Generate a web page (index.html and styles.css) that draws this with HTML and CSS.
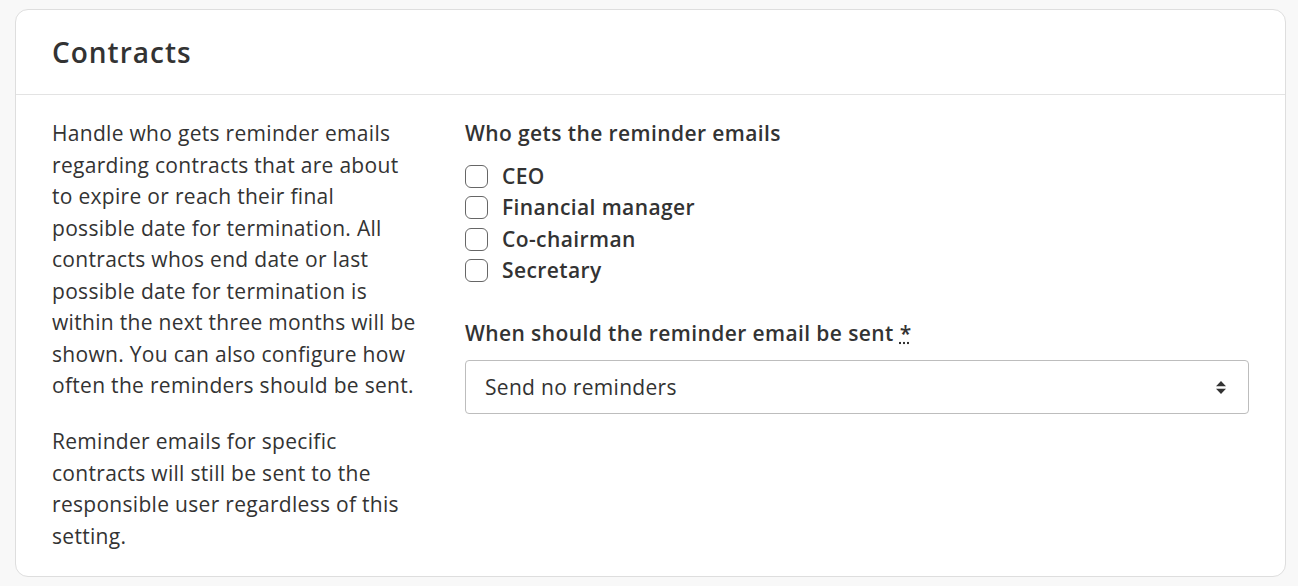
FILE: index.html
```html
<!DOCTYPE html>
<html lang="en">
<head>
<meta charset="utf-8">
<title>Contracts</title>
<link rel="stylesheet" href="styles.css">
</head>
<body>
<section class="card">
  <header class="card-header">
    <h2 class="card-title">Contracts</h2>
  </header>
  <div class="card-body">
    <div class="intro">
      <p>Handle who gets reminder emails regarding contracts that are about to expire or reach their final possible date for termination. All contracts whos end date or last possible date for termination is within the next three months will be shown. You can also configure how often the reminders should be sent.</p>
      <p>Reminder emails for specific contracts will still be sent to the responsible user regardless of this setting.</p>
    </div>
    <div class="form">
      <div class="field">
        <div class="field-label">Who gets the reminder emails</div>
        <div class="checks">
          <label class="check"><span class="box"></span>CEO</label>
          <label class="check"><span class="box"></span>Financial manager</label>
          <label class="check"><span class="box"></span>Co-chairman</label>
          <label class="check"><span class="box"></span>Secretary</label>
        </div>
      </div>
      <div class="field">
        <div class="field-label">When should the reminder email be sent <abbr class="req" title="required">*</abbr></div>
        <div class="select">
          <span>Send no reminders</span>
          <svg class="arrows" width="10" height="13" viewBox="0 0 10 13"><path d="M5 0 L10 5.2 H0 Z M5 13 L10 7.8 H0 Z" fill="#333"/></svg>
        </div>
      </div>
    </div>
  </div>
</section>
</body>
</html>
```

FILE: styles.css
```css
* { box-sizing: border-box; }
html, body { margin: 0; padding: 0; }
body {
  background: #f8f8f8;
  font-family: "Open Sans", Lato, sans-serif;
  color: #333;
  padding: 9px 12px 9px 15px;
}
.card {
  background: #fff;
  border: 1px solid #dedede;
  border-radius: 13px;
  width: 1271px;
}
.card-header {
  height: 85px;
  border-bottom: 1px solid #e3e3e3;
  padding: 0 36px;
  display: flex;
  align-items: center;
}
.card-title {
  margin: 0;
  font-size: 28px;
  font-weight: 600;
  letter-spacing: 1px;
}
.card-body {
  display: grid;
  grid-template-columns: 368px 1fr;
  column-gap: 45px;
  padding: 23px 36px 24px 36px;
}
.intro p {
  margin: 0 0 24.5px 0;
  font-size: 21px;
  letter-spacing: 0.3px;
  line-height: 31.5px;
}
.intro p:last-child { margin-bottom: 0; }
.field { margin-bottom: 31px; }
.field-label {
  font-size: 21px;
  font-weight: 600;
  letter-spacing: 0.4px;
  line-height: 31.5px;
}
.checks { margin-top: 11px; }
.req { text-decoration: underline dotted; cursor: help; }
.check {
  display: flex;
  align-items: center;
  gap: 14px;
  font-size: 21px;
  font-weight: 600;
  letter-spacing: 0.4px;
  line-height: 31.5px;
}
.box {
  width: 23px;
  height: 23px;
  border: 1px solid #666;
  border-radius: 6px;
  background: #fff;
}
.select {
  height: 54px;
  border: 1px solid #bdbdbd;
  border-radius: 4px;
  display: flex;
  align-items: center;
  justify-content: space-between;
  padding: 0 22px 0 19px;
  font-size: 21px;
  letter-spacing: 0.3px;
  margin-top: 11px;
}
```
